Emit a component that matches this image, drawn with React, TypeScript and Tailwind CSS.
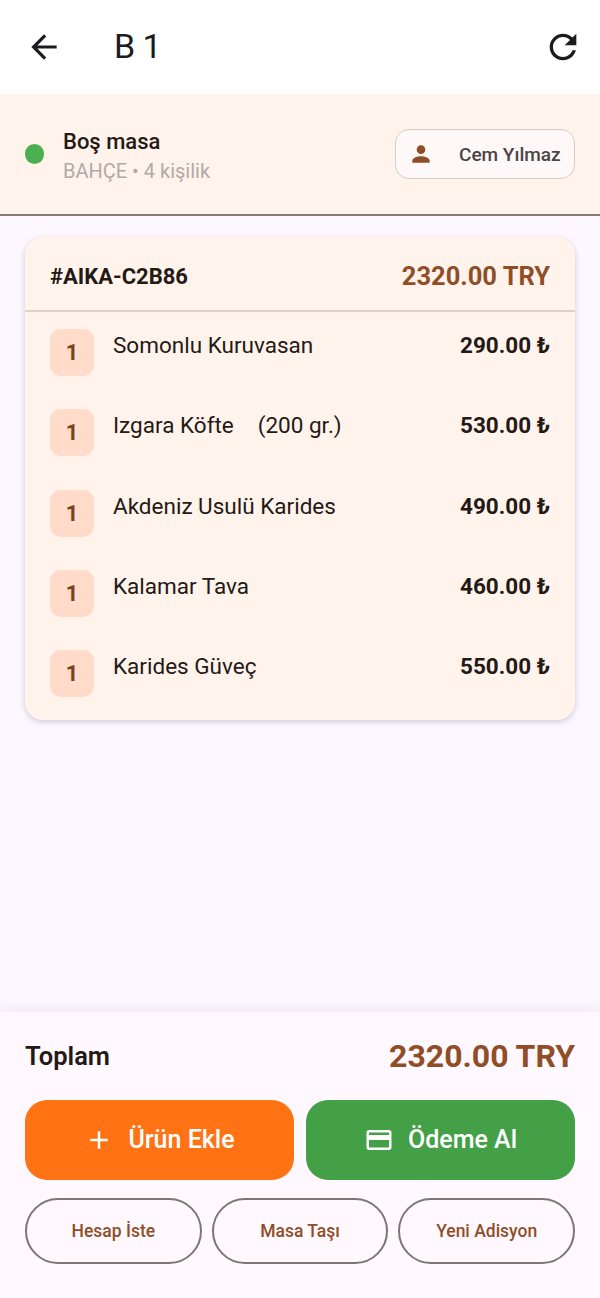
import React from 'react';

const items = [
  { name: 'Somonlu Kuruvasan', note: '', price: '290.00 ₺' },
  { name: 'Izgara Köfte', note: '(200 gr.)', price: '530.00 ₺' },
  { name: 'Akdeniz Usulü Karides', note: '', price: '490.00 ₺' },
  { name: 'Kalamar Tava', note: '', price: '460.00 ₺' },
  { name: 'Karides Güveç', note: '', price: '550.00 ₺' },
];

const Icon = ({ d, className }: { d: string; className: string }) => (
  <svg viewBox="0 0 24 24" fill="currentColor" className={className}>
    <path d={d} />
  </svg>
);

const icons = {
  back: 'M20 11H7.83l5.59-5.59L12 4l-8 8 8 8 1.41-1.41L7.83 13H20v-2z',
  refresh:
    'M17.65 6.35C16.2 4.9 14.21 4 12 4c-4.42 0-7.99 3.58-7.99 8s3.57 8 7.99 8c3.73 0 6.84-2.55 7.73-6h-2.08c-.82 2.33-3.04 4-5.65 4-3.31 0-6-2.69-6-6s2.69-6 6-6c1.66 0 3.14.69 4.22 1.78L13 11h7V4l-2.35 2.35z',
  person:
    'M12 12c2.21 0 4-1.79 4-4s-1.79-4-4-4-4 1.79-4 4 1.79 4 4 4zm0 2c-2.67 0-8 1.34-8 4v2h16v-2c0-2.66-5.33-4-8-4z',
  add: 'M19 13h-6v6h-2v-6H5v-2h6V5h2v6h6v2z',
  card: 'M20 4H4c-1.11 0-1.99.89-1.99 2L2 18c0 1.11.89 2 2 2h16c1.11 0 2-.89 2-2V6c0-1.11-.89-2-2-2zm0 14H4v-6h16v6zm0-10H4V6h16v2z',
};

const App = () => {
  return (
    <div className="flex h-[1298px] w-[600px] flex-col overflow-hidden bg-[#fdf7ff] font-['Roboto',sans-serif] text-[#1f1a1c]">
      {/* App bar */}
      <header className="flex h-[94px] items-center bg-white pl-[25px] pr-[17px]">
        <Icon d={icons.back} className="h-[38px] w-[38px] text-[#1d1b20]" />
        <h1 className="ml-[51px] pb-[2px] text-[34px] leading-none tracking-[-0.5px] text-[#1d1b20]">B 1</h1>
        <Icon d={icons.refresh} className="ml-auto h-[40px] w-[40px] text-[#1d1b20]" />
      </header>

      {/* Table status */}
      <section className="flex h-[122px] items-center border-b-2 border-[#857b79] bg-[#fff3ec] pl-[25px] pr-[25px]">
        <span className="h-[20px] w-[19px] rounded-full bg-[#4caf50]" />
        <div className="ml-[19px] pt-[5px]">
          <div className="text-[22px] leading-[30px] font-medium text-[#231a16]">Boş masa</div>
          <div className="text-[20px] leading-[29px] text-[#b3aaa6]">BAHÇE • 4 kişilik</div>
        </div>
        <div className="ml-auto flex h-[50px] w-[180px] items-center rounded-[14px] border-[1.5px] border-[#dccbc4] bg-[#fff8f8] pl-[12px]">
          <Icon d={icons.person} className="h-[26px] w-[26px] text-[#8f4e27]" />
          <span className="ml-[25px] pt-[2px] text-[19px] font-medium text-[#4a4446]">Cem Yılmaz</span>
        </div>
      </section>

      {/* Order card */}
      <main className="flex-1 px-[25px] pt-[21px]">
        <div className="rounded-[18px] bg-[#fff3ec] shadow-[0_2px_6px_rgba(0,0,0,0.18)]">
          <div className="flex h-[75px] items-center justify-between border-b-2 border-[#e0d0c8] px-[25px] pt-[6px]">
            <span className="text-[22px] font-bold text-[#231a16]">#AIKA-C2B86</span>
            <span className="text-[25.5px] font-bold text-[#8f4e27]">2320.00 TRY</span>
          </div>
          <ul className="px-[25px] pt-[17px] pb-[23px]">
            {items.map((item) => (
              <li key={item.name} className="mb-[33.25px] flex items-start last:mb-0">
                <span className="flex h-[47px] w-[44px] items-center justify-center rounded-[11px] bg-[#ffdbca] text-[22px] font-bold text-[#7a4320]">
                  1
                </span>
                <span className="ml-[19px] text-[22.5px] leading-[32px] text-[#231a16]">{item.name}</span>
                {item.note && (
                  <span className="ml-[24px] text-[22.5px] leading-[32px] text-[#231a16]">{item.note}</span>
                )}
                <span className="ml-auto text-[22.5px] leading-[32px] font-bold text-[#231a16]">{item.price}</span>
              </li>
            ))}
          </ul>
        </div>
      </main>

      {/* Totals and actions */}
      <footer className="h-[286px] bg-[#fff8fe] px-[25px] pt-[20px] shadow-[0_-4px_12px_rgba(0,0,0,0.06)]">
        <div className="flex h-[48px] items-center justify-between">
          <span className="text-[25.5px] font-semibold text-[#231a16]">Toplam</span>
          <span className="text-[32px] font-bold text-[#8f4e27]">2320.00 TRY</span>
        </div>
        <div className="mt-[20px] flex gap-[12px]">
          <button className="flex h-[80px] flex-1 items-center justify-center gap-[14px] rounded-[22px] bg-[#ff7315] text-[25px] font-medium text-white">
            <Icon d={icons.add} className="h-[30px] w-[30px]" />
            Ürün Ekle
          </button>
          <button className="flex h-[80px] flex-1 items-center justify-center gap-[14px] rounded-[22px] bg-[#43a047] text-[25px] font-medium text-white">
            <Icon d={icons.card} className="h-[30px] w-[30px]" />
            Ödeme Al
          </button>
        </div>
        <div className="mt-[18px] flex gap-[10px]">
          {['Hesap İste', 'Masa Taşı', 'Yeni Adisyon'].map((label) => (
            <button
              key={label}
              className="h-[66px] flex-1 rounded-full border-2 border-[#7f7573] text-[17.5px] font-medium text-[#8f4e27]"
            >
              {label}
            </button>
          ))}
        </div>
      </footer>
    </div>
  );
};

export default App;
